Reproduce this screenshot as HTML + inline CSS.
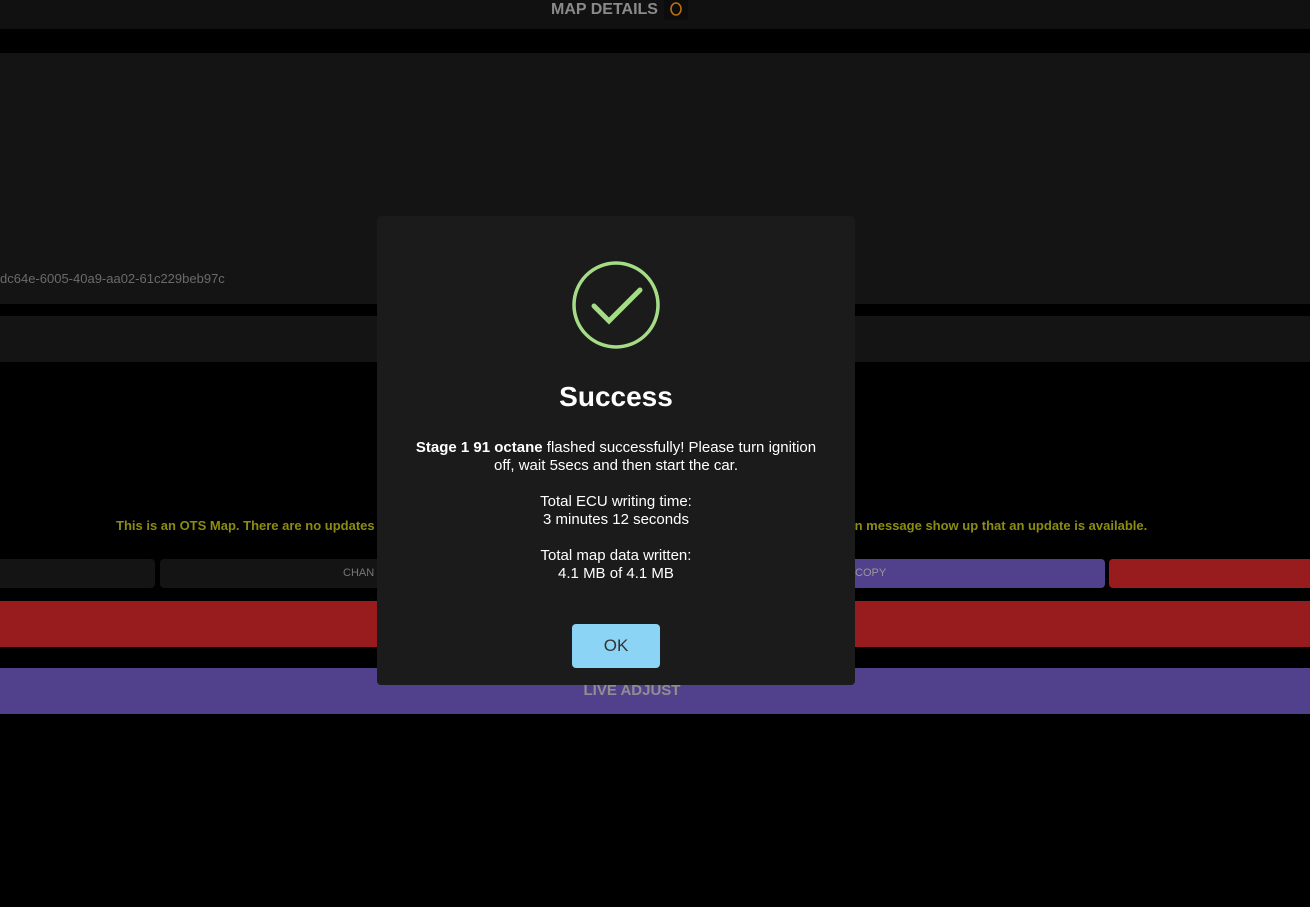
<!DOCTYPE html>
<html><head><meta charset="utf-8"><style>
body{margin:0;width:1310px;height:907px;background:#000;position:relative;overflow:hidden;font-family:"Liberation Sans",sans-serif}
.a{position:absolute}
</style></head><body>
<div class="a" style="left:0;top:0;width:1310px;height:29px;background:#111"></div>
<div class="a" style="left:551px;top:0;font-size:16px;font-weight:bold;color:#8a8a8a;line-height:19px">MAP DETAILS</div>
<div class="a" style="left:664px;top:0;width:24px;height:20px;background:#0c0c0c"></div>
<svg class="a" style="left:669px;top:1px" width="14" height="16"><ellipse cx="7" cy="8" rx="5" ry="6" fill="none" stroke="#b86f10" stroke-width="1.6"/></svg>
<div class="a" style="left:0;top:53px;width:1310px;height:251px;background:#141414"></div>
<div class="a" style="left:0;top:271px;font-size:13px;color:#6a6a6a">dc64e-6005-40a9-aa02-61c229beb97c</div>
<div class="a" style="left:0;top:316px;width:1310px;height:46px;background:#141414"></div>
<div class="a" style="left:116px;top:518px;font-size:13px;font-weight:bold;color:#8c8c10;white-space:nowrap">This is an OTS Map. There are no updates<span style="display:inline-block;width:480px"></span>n message show up that an update is available.</div>
<div class="a" style="left:0;top:559px;width:155px;height:29px;background:#141414;border-radius:0 4px 4px 0"></div>
<div class="a" style="left:160px;top:559px;width:380px;height:29px;background:#141414;border-radius:4px"></div>
<div class="a" style="left:343px;top:567px;font-size:11px;color:#777">CHAN</div>
<div class="a" style="left:700px;top:559px;width:405px;height:29px;background:#51408c;border-radius:4px"></div>
<div class="a" style="left:855px;top:567px;font-size:11px;color:#999">COPY</div>
<div class="a" style="left:1109px;top:559px;width:201px;height:29px;background:#981b1e;border-radius:4px 0 0 4px"></div>
<div class="a" style="left:0;top:601px;width:1310px;height:46px;background:#981b1e"></div>
<div class="a" style="left:0;top:668px;width:1310px;height:46px;background:#51408c"></div>
<div class="a" style="left:0;top:682px;width:1264px;text-align:center;font-size:15px;font-weight:bold;color:#8f8f8f">LIVE ADJUST</div>
<div class="a" style="left:377px;top:216px;width:478px;height:469px;background:#1b1b1b;border-radius:4px;color:#fff;text-align:center">
<svg class="a" style="left:194px;top:44px" width="90" height="90"><circle cx="45" cy="45" r="42" fill="none" stroke="#a5dc86" stroke-width="3.5"/><path d="M23 46 L38 61 L69 30" fill="none" stroke="#a5dc86" stroke-width="5" stroke-linecap="round"/></svg>
<div class="a" style="left:0;top:165px;width:478px;font-size:28px;font-weight:bold">Success</div>
<div class="a" style="left:34px;top:223px;width:410px;font-size:15px;line-height:18px">
<b>Stage 1 91 octane</b> flashed successfully! Please turn ignition off, wait 5secs and then start the car.<br><div style="height:18px"></div>Total ECU writing time:<br>3 minutes 12 seconds<br><div style="height:18px"></div>Total map data written:<br>4.1 MB of 4.1 MB</div>
<div class="a" style="left:195px;top:408px;width:88px;height:44px;background:#8cd4f5;border-radius:4px;color:#333;font-size:17px;line-height:44px">OK</div>
</div>
</body></html>
